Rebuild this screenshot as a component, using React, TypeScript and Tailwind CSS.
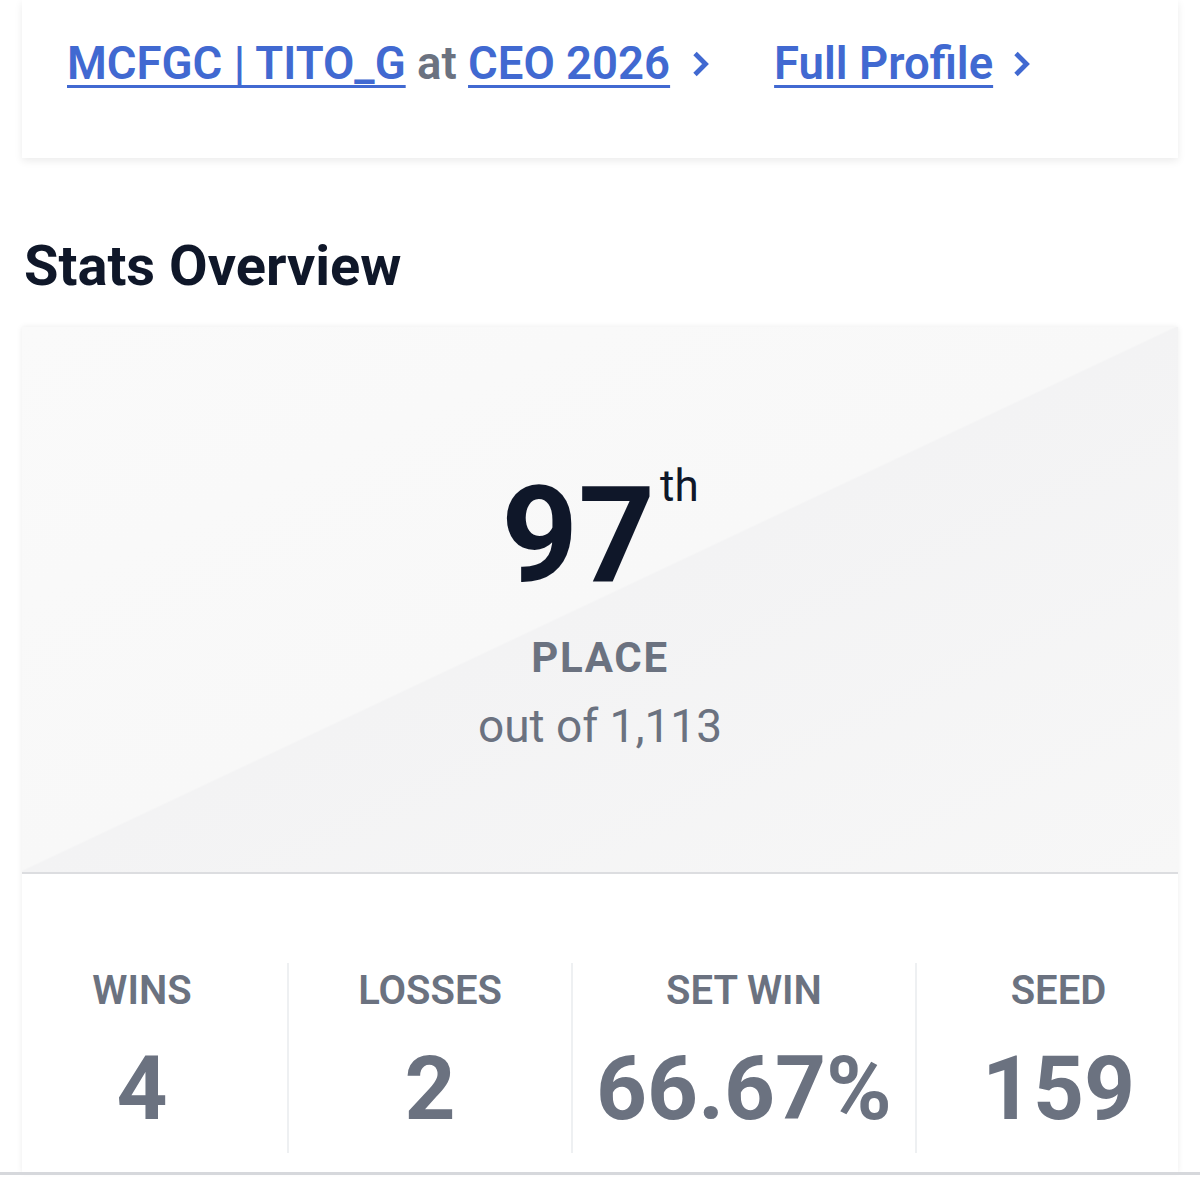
import React from 'react';

const font = { fontFamily: 'Roboto, "Noto Sans", sans-serif' };

function Chevron() {
  return (
    <svg viewBox="0 0 20 28" width="20" height="28" className="shrink-0">
      <path d="M4 3.5L14.5 14L4 24.5" fill="none" stroke="#4169d1" strokeWidth="4.8" />
    </svg>
  );
}

const stats = [
  { label: 'WINS', value: '4', cls: 'w-[265px] pr-[25px]' },
  { label: 'LOSSES', value: '2', cls: 'w-[284px] border-l-2 border-[#eef0f2]' },
  { label: 'SET WIN', value: '66.67%', cls: 'w-[344px] border-l-2 border-[#eef0f2]' },
  { label: 'SEED', value: '159', cls: 'flex-1 pl-[22px] border-l-2 border-[#eef0f2]' },
];

export default function App() {
  return (
    <div className="w-[1200px] h-[1200px] bg-white overflow-hidden" style={font}>
      {/* event links card */}
      <div className="mx-[22px] h-[158px] bg-white shadow-[0_3px_8px_rgba(0,0,0,0.08)] pt-[41px] pl-[45px]">
        <div className="flex items-center text-[45.5px] leading-none font-semibold">
          <a href="#" className="text-[#4169d1] underline decoration-[3px] underline-offset-[6px]">
            MCFGC | TITO_G
          </a>
          <span className="text-[#6b7280] whitespace-pre"> at </span>
          <a href="#" className="text-[#4169d1] underline decoration-[3px] underline-offset-[6px]">
            CEO 2026
          </a>
          <span className="ml-[21px]">
            <Chevron />
          </span>
          <a href="#" className="ml-[63px] text-[#4169d1] underline decoration-[3px] underline-offset-[6px]">
            Full Profile
          </a>
          <span className="ml-[19px]">
            <Chevron />
          </span>
        </div>
      </div>

      <h2 className="mt-[80px] ml-[24px] text-[56px] leading-none font-bold text-[#0f1729]">Stats Overview</h2>

      {/* stats card */}
      <div className="mt-[33px] mx-[22px] h-[845px] bg-white shadow-[0_0_6px_rgba(0,0,0,0.08)] flex flex-col">
        <div className="bg-[linear-gradient(to_bottom_right,#fafafa_0%,#f8f8f8_49.8%,#f3f3f4_50%,#f7f7f7_100%)] pt-[142px] pb-[123px] flex flex-col items-center border-b-2 border-[#dcdde0]">
          <div className="flex items-start">
            <span className="text-[134px] leading-none font-bold text-[#0f1729]">97</span>
            <span className="ml-[5px] -mt-[5px] text-[44px] leading-none text-[#0f1729]">th</span>
          </div>
          <div className="mt-[34px] text-[42px] leading-none font-bold tracking-[0.04em] text-[#6b7280]">PLACE</div>
          <div className="mt-[24px] text-[46px] leading-none text-[#6b7280]">out of 1,113</div>
        </div>

        <div className="flex-1 flex pt-[89px]">
          {stats.map((s) => (
            <div key={s.label} className={`${s.cls} h-[190px] flex flex-col items-center pt-[8px]`}>
              <div className="text-[40px] leading-none font-semibold text-[#6b7280]">{s.label}</div>
              <div className="mt-[33px] text-[89px] leading-none font-bold text-[#6b7280]">{s.value}</div>
            </div>
          ))}
        </div>
      </div>

      <div className="border-t-[3px] border-[#d6d8dc]" />
    </div>
  );
}
